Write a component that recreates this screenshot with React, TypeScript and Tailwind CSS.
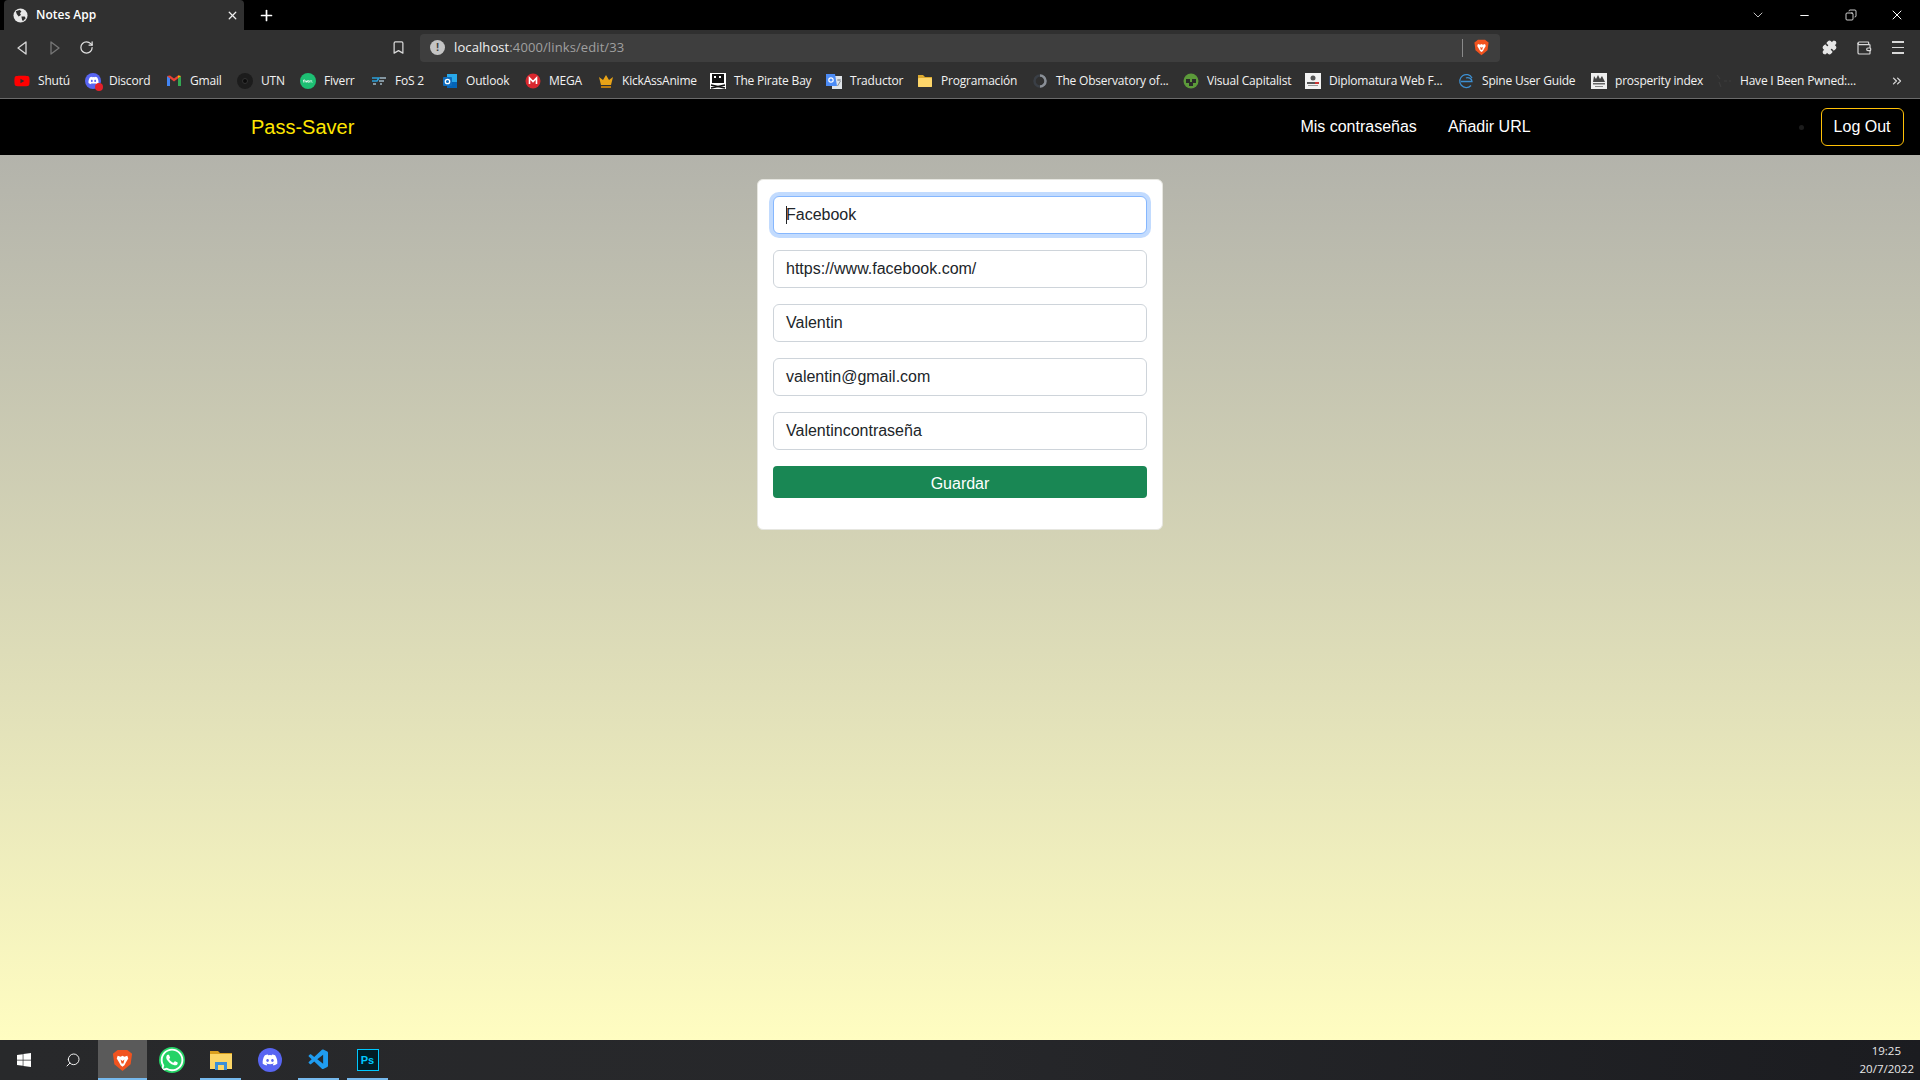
import React from "react";
import { Bookmark, ChevronDown, Minus, Plus, RotateCw, X, Search, Copy, Puzzle, Wallet, ChevronsRight } from "lucide-react";
import { FaWindows, FaWhatsapp, FaDiscord, FaYoutube } from "react-icons/fa";
import { VscVscode } from "react-icons/vsc";
import { SiFiverr } from "react-icons/si";

const ui = "font-['Open_Sans','Noto_Sans',sans-serif]";

function Back() {
  return (
    <svg width="14" height="16" viewBox="0 0 14 16" fill="none" stroke="#d8d8d8" strokeWidth="1.3" strokeLinejoin="round">
      <path d="M11 2 L3 8 L11 14 Z" />
    </svg>
  );
}

function Forward() {
  return (
    <svg width="14" height="16" viewBox="0 0 14 16" fill="none" stroke="#777" strokeWidth="1.3" strokeLinejoin="round">
      <path d="M3 2 L11 8 L3 14 Z" />
    </svg>
  );
}

function GlobeFilled() {
  return (
    <svg width="15" height="15" viewBox="0 0 16 16">
      <circle cx="8" cy="8" r="7.5" fill="#e8e8e8" />
      <path d="M3 3.5 L7 2 L9 3.5 L7.5 5.5 L8.5 7.5 L6 9 L4 6.5 Z" fill="#303030" />
      <path d="M9 9 L12.5 9 L13.5 11 L10.5 14 L9.5 12 Z" fill="#303030" />
    </svg>
  );
}

function BraveIcon({ size = 16 }: { size?: number }) {
  return (
    <svg width={size} height={size} viewBox="0 0 24 24">
      <path d="M12 1 L17 1 L20 3.5 L22 5 L20.5 16 L12 23 L3.5 16 L2 5 L4 3.5 L7 1 Z" fill="#f1531f" />
      <path d="M7 7 L10 8 L12 7 L14 8 L17 7 L18 10 L15.5 14 L14 17 L12 18.5 L10 17 L8.5 14 L6 10 Z" fill="#fff" />
      <path d="M10 11 L12 12.5 L14 11 L13 15 L11 15 Z" fill="#f1531f" />
    </svg>
  );
}

function Gmail() {
  return (
    <svg width="16" height="16" viewBox="0 0 16 16">
      <path d="M1 3 L4 5 V13 H1 Z" fill="#4285f4" />
      <path d="M15 3 L12 5 V13 H15 Z" fill="#34a853" />
      <path d="M1 3 L8 8.5 L15 3 L12 2.5 L8 5.5 L4 2.5 Z" fill="#ea4335" />
      <path d="M12 2.5 L15 3 L12 5 Z" fill="#fbbc04" />
    </svg>
  );
}

function Discordish() {
  return (
    <div className="relative w-4 h-4 rounded-full bg-[#5865f2] flex items-center justify-center">
      <FaDiscord size={11} color="#fff" />
      <div className="absolute right-[-2px] bottom-[-2px] w-2 h-2 rounded-full bg-[#e5202a]" />
    </div>
  );
}

function Utn() {
  return (
    <div className="w-4 h-4 rounded-full bg-[#1c1c1c] flex items-center justify-center">
      <div className="w-[6px] h-[6px] rounded-full bg-[#0c0c0c] border border-[#333]" />
    </div>
  );
}

function Fos() {
  return (
    <svg width="16" height="16" viewBox="0 0 16 16" fill="none" strokeWidth="1.6">
      <path d="M1 5 H8 L6 8 H1" stroke="#2b9fd8" />
      <path d="M9 5 H15 M8 8 H13 M2 11 H5 M9 11 H11" stroke="#9fb7c5" />
    </svg>
  );
}

function Outlook() {
  return (
    <svg width="16" height="16" viewBox="0 0 16 16">
      <rect x="5" y="1" width="10" height="14" fill="#28a8ea" />
      <rect x="5" y="9" width="10" height="6" fill="#0364b8" />
      <rect x="1" y="4" width="9" height="9" rx="1" fill="#0f6cbd" />
      <circle cx="5.5" cy="8.5" r="2.2" fill="none" stroke="#fff" strokeWidth="1.3" />
    </svg>
  );
}

function Mega() {
  return (
    <svg width="16" height="16" viewBox="0 0 16 16">
      <circle cx="8" cy="8" r="7.5" fill="#d9272e" />
      <path d="M4.5 11 V5 L8 8.5 L11.5 5 V11" fill="none" stroke="#fff" strokeWidth="1.6" />
    </svg>
  );
}

function Crown() {
  return (
    <svg width="16" height="16" viewBox="0 0 16 16">
      <path d="M3 12 L1 4 L5 7 L8 2 L11 7 L15 4 L13 12 Z" fill="#e8a317" />
      <rect x="3" y="13" width="10" height="2" fill="#b87a10" />
    </svg>
  );
}

function Pirate() {
  return (
    <svg width="16" height="16" viewBox="0 0 16 16">
      <rect width="16" height="16" fill="#fff" />
      <rect x="2" y="1" width="12" height="9" fill="#111" />
      <rect x="4" y="3" width="2" height="2" fill="#fff" />
      <rect x="9" y="3" width="2" height="2" fill="#fff" />
      <path d="M1 12 L15 15 M15 12 L1 15" stroke="#111" strokeWidth="1.6" />
    </svg>
  );
}

function Translate() {
  return (
    <svg width="16" height="16" viewBox="0 0 16 16">
      <rect x="6" y="3" width="10" height="13" fill="#dfe3e8" />
      <path d="M11 7 H15 M13 6 V8 M11.5 13 L14.5 8" stroke="#8a8f96" strokeWidth="1" />
      <path d="M0 1 H9 L11 13 H0 Z" fill="#4c8bf5" />
      <circle cx="5" cy="7" r="2.2" fill="none" stroke="#fff" strokeWidth="1.2" />
    </svg>
  );
}

function Folder() {
  return (
    <svg width="16" height="16" viewBox="0 0 16 16">
      <path d="M1 2 H6 L8 4 H15 V14 H1 Z" fill="#dba92f" />
      <rect x="1" y="5" width="14" height="9" rx="1" fill="#fdd56a" />
    </svg>
  );
}

function Ring() {
  return (
    <svg width="16" height="16" viewBox="0 0 16 16" fill="none">
      <circle cx="8" cy="8" r="5.5" stroke="#3a3f46" strokeWidth="2.5" />
      <path d="M8 2.5 A5.5 5.5 0 0 1 8 13.5" stroke="#8a8f96" strokeWidth="2.5" />
    </svg>
  );
}

function Creeper() {
  return (
    <svg width="16" height="16" viewBox="0 0 16 16">
      <circle cx="8" cy="8" r="7.5" fill="#5c9a3a" />
      <path d="M3 6 H7 V9 H9 V6 H13 V10 H10 V13 H6 V10 H3 Z" fill="#2a2a2a" />
    </svg>
  );
}

function Diplo() {
  return (
    <svg width="16" height="16" viewBox="0 0 16 16">
      <rect width="16" height="16" fill="#f2f2f2" />
      <circle cx="8" cy="5" r="2.5" fill="#555" />
      <rect x="2" y="9" width="8" height="2" fill="#555" />
      <rect x="10" y="9" width="4" height="2" fill="#c33" />
      <rect x="3" y="12" width="10" height="1" fill="#999" />
    </svg>
  );
}

function Spine() {
  return (
    <svg width="16" height="16" viewBox="0 0 16 16" fill="none" stroke="#3d8fd1" strokeWidth="1.3">
      <path d="M14 5 A6.5 6.5 0 1 0 13 12.5" />
      <path d="M3 8.5 H14 C14 5 10 4 8 5" />
    </svg>
  );
}

function Prosperity() {
  return (
    <svg width="16" height="16" viewBox="0 0 16 16">
      <rect width="16" height="16" fill="#eee" />
      <path d="M2 9 L3 3 L5 6 L7 2 L9 6 L11 3 L14 9 Z" fill="#444" />
      <rect x="2" y="10" width="12" height="1.5" fill="#666" />
      <rect x="4" y="13" width="8" height="1" fill="#888" />
    </svg>
  );
}

function Pwned() {
  return (
    <svg width="16" height="16" viewBox="0 0 16 16" stroke="#3c3c3c" strokeWidth="1.2" fill="none">
      <path d="M1 2 L4 6 M3 9 L5 14 M8 8 H11 M13 8 H15" />
    </svg>
  );
}

const bookmarks: { label: string; icon: React.ReactNode; w: string }[] = [
  { label: "Shutú", icon: <FaYoutube size={16} color="#ff0000" />, w: "w-[71px]" },
  { label: "Discord", icon: <Discordish />, w: "w-[81px]" },
  { label: "Gmail", icon: <Gmail />, w: "w-[71px]" },
  { label: "UTN", icon: <Utn />, w: "w-[63px]" },
  { label: "Fiverr", icon: <div className="w-4 h-4 rounded-full bg-[#1dbf73] flex items-center justify-center"><SiFiverr size={10} color="#fff" /></div>, w: "w-[71px]" },
  { label: "FoS 2", icon: <Fos />, w: "w-[71px]" },
  { label: "Outlook", icon: <Outlook />, w: "w-[83px]" },
  { label: "MEGA", icon: <Mega />, w: "w-[73px]" },
  { label: "KickAssAnime", icon: <Crown />, w: "w-[112px]" },
  { label: "The Pirate Bay", icon: <Pirate />, w: "w-[116px]" },
  { label: "Traductor", icon: <Translate />, w: "w-[91px]" },
  { label: "Programación", icon: <Folder />, w: "w-[115px]" },
  { label: "The Observatory of...", icon: <Ring />, w: "w-[151px]" },
  { label: "Visual Capitalist", icon: <Creeper />, w: "w-[122px]" },
  { label: "Diplomatura Web F...", icon: <Diplo />, w: "w-[153px]" },
  { label: "Spine User Guide", icon: <Spine />, w: "w-[133px]" },
  { label: "prosperity index", icon: <Prosperity />, w: "w-[125px]" },
  { label: "Have I Been Pwned:...", icon: <Pwned />, w: "w-[160px]" },
];

function Field({ value, focused = false }: { value: string; focused?: boolean }) {
  return (
    <div
      className={
        "relative h-[38px] rounded-[6px] border bg-white px-3 flex items-center text-[16px] text-[#212529] " +
        (focused ? "border-[#86b7fe] shadow-[0_0_0_4px_rgba(13,110,253,0.25)]" : "border-[#ced4da]")
      }
    >
      {focused && <div className="absolute left-[12px] top-[9px] w-px h-[18px] bg-[#212529]" />}
      {value}
    </div>
  );
}

function TaskCell({ children, w = "w-[49px]", active = false, line = false }: { children: React.ReactNode; w?: string; active?: boolean; line?: boolean }) {
  return (
    <div className={"relative h-full flex items-center justify-center " + w + (active ? " bg-[#5a5a5a]" : "")}>
      {children}
      {line && <div className={"absolute bottom-0 h-[2px] bg-[#76b9ed] " + (active ? "inset-x-0" : "inset-x-[4px]")} />}
    </div>
  );
}

export default function App() {
  return (
    <div className="w-[1920px] h-[1080px] flex flex-col overflow-hidden font-['Liberation_Sans',Arial,sans-serif]">
      {/* Tab strip */}
      <div className="h-[30px] bg-black flex items-end pl-[4px] shrink-0">
        <div className={"w-[240px] h-[30px] rounded-t-[4px] bg-[#303030] flex items-center pl-[9px] pr-[5px] text-white text-[12px] font-semibold " + ui}>
          <GlobeFilled />
          <span className="ml-[8px] flex-1">Notes App</span>
          <X size={13} color="#eee" strokeWidth={2.4} />
        </div>
        <div className="w-[44px] h-[30px] flex items-center justify-center">
          <Plus size={17} color="#fff" strokeWidth={2.4} />
        </div>
        <div className="flex-1" />
        <div className="h-[30px] flex items-center">
          <div className="w-[46px] flex justify-center"><ChevronDown size={16} strokeWidth={1.3} color="#ddd" /></div>
          <div className="w-[46px] flex justify-center"><Minus size={13} strokeWidth={1.8} color="#fff" /></div>
          <div className="w-[47px] flex justify-center"><Copy size={12} strokeWidth={1.6} color="#fff" className="-scale-x-100" /></div>
          <div className="w-[46px] flex justify-center"><X size={16} strokeWidth={1.5} color="#fff" /></div>
        </div>
      </div>

      {/* Toolbar */}
      <div className="h-[35px] bg-[#303030] flex items-center shrink-0">
        <div className="w-[44px] flex justify-center"><Back /></div>
        <div className="w-[21px] flex justify-center"><Forward /></div>
        <div className="w-[42px] flex justify-center"><RotateCw size={15} color="#e0e0e0" strokeWidth={2} /></div>
        <div className="ml-[283px] w-[16px] flex justify-center"><Bookmark size={15} color="#d8d8d8" strokeWidth={2} /></div>
        <div className="ml-[14px] w-[1080px] h-[28px] rounded-[4px] bg-[#3e3e3e] flex items-center pl-[10px] pr-[10px]">
          <div className="w-[15px] h-[15px] rounded-full bg-[#c4c4c4] flex items-center justify-center">
            <span className="text-[#3e3e3e] text-[11px] font-bold leading-none">!</span>
          </div>
          <div className={"ml-[9px] flex-1 pt-[1px] text-[13px] tracking-[0.1px] " + ui}>
            <span className="text-[#f0f0f0]">localhost</span>
            <span className="text-[#a0a0a0]">:4000/links/edit/33</span>
          </div>
          <div className="w-px h-[18px] bg-[#8a8a8a] mr-[10px]" />
          <BraveIcon size={17} />
        </div>
        <div className="ml-[322px] flex items-center">
          <Puzzle size={15} color="#e6e6e6" fill="#e6e6e6" />
          <div className="ml-[19px]"><Wallet size={16} color="#d8d8d8" strokeWidth={1.8} /></div>
          <div className="ml-[20px] w-[12px] flex flex-col gap-[4px]">
            <div className="h-[1.5px] bg-[#d8d8d8]" />
            <div className="h-[1.5px] bg-[#d8d8d8]" />
            <div className="h-[1.5px] bg-[#d8d8d8]" />
          </div>
        </div>
      </div>

      {/* Bookmarks */}
      <div className={"h-[34px] bg-[#303030] border-b border-[#6a6a6a] flex items-center pl-[14px] pb-[2px] text-[12px] text-[#f2f2f2] shrink-0 relative " + ui}>
        {bookmarks.map((b) => (
          <div key={b.label} className={"flex items-center gap-[8px] shrink-0 whitespace-nowrap tracking-[-0.2px] " + b.w}>
            <div className="w-4 h-4 flex items-center justify-center shrink-0">{b.icon}</div>
            <span>{b.label}</span>
          </div>
        ))}
        <div className="absolute right-[16px] top-[9px]"><ChevronsRight size={14} color="#d8d8d8" strokeWidth={2.2} /></div>
      </div>

      {/* Navbar */}
      <div className="h-[56px] bg-black flex items-center pl-[251px] pr-[16px] shrink-0">
        <span className="text-[20px] text-[#ffe600]">Pass-Saver</span>
        <div className="ml-[946px] text-[16px] text-white">Mis contraseñas</div>
        <div className="ml-[31px] text-[16px] text-white">Añadir URL</div>
        <div className="ml-[268px] w-[5px] h-[5px] rounded-full bg-[#1c1c1c]" />
        <div className="ml-[17px] w-[83px] h-[38px] rounded-[6px] border border-[#ffc107] flex items-center justify-center text-[16px] text-white">Log Out</div>
      </div>

      {/* Main */}
      <div className="flex-1 bg-gradient-to-b from-[#b3b3ab] to-[#fffdc1] flex justify-center pt-[24px]">
        <div className="w-[406px] h-[351px] rounded-[6px] bg-white border border-[#e6e6e0] pt-[16px] px-[15px] flex flex-col gap-[16px]">
          <Field value="Facebook" focused />
          <Field value="https://www.facebook.com/" />
          <Field value="Valentin" />
          <Field value="valentin@gmail.com" />
          <Field value="Valentincontraseña" />
          <div className="h-[32px] rounded-[4px] bg-[#198754] flex items-center justify-center pt-[4px] text-[16px] text-white">Guardar</div>
        </div>
      </div>

      {/* Taskbar */}
      <div className="h-[40px] bg-gradient-to-r from-[#28292b] via-[#26272a] to-[#1b1c20] flex items-center shrink-0">
        <TaskCell w="w-[48px]"><FaWindows size={16} color="#fff" /></TaskCell>
        <TaskCell w="w-[50px]"><Search size={16} color="#fff" strokeWidth={1.4} className="-scale-x-100" /></TaskCell>
        <TaskCell w="w-[49px]" active line><BraveIcon size={23} /></TaskCell>
        <TaskCell w="w-[49px]"><FaWhatsapp size={26} color="#fff" className="rounded-full bg-[#25d366]" /></TaskCell>
        <TaskCell w="w-[49px]" line>
          <svg width="22" height="20" viewBox="0 0 22 20">
            <path d="M0 1 H8 L10 3 H22 V19 H0 Z" fill="#d99f1e" />
            <rect x="0" y="4" width="22" height="15" fill="#fbd667" />
            <rect x="5" y="12" width="12" height="8" fill="#3a8fd8" />
            <rect x="8" y="15" width="6" height="5" fill="#fbd667" />
          </svg>
        </TaskCell>
        <TaskCell w="w-[49px]">
          <div className="w-6 h-6 rounded-full bg-[#5865f2] flex items-center justify-center"><FaDiscord size={16} color="#fff" /></div>
        </TaskCell>
        <TaskCell w="w-[49px]" line><VscVscode size={24} color="#1f9cf0" /></TaskCell>
        <TaskCell w="w-[49px]" line>
          <div className="w-[22px] h-[22px] bg-[#001d26] border border-[#00c8ff] flex items-center justify-center text-[11px] font-bold text-[#00c8ff]">Ps</div>
        </TaskCell>
        <div className="flex-1" />
        <div className={"pr-[6px] flex flex-col items-end text-[11.5px] leading-[18px] text-[#e8e8e8] " + ui}>
          <span className="pr-[13px]">19:25</span>
          <span>20/7/2022</span>
        </div>
      </div>
    </div>
  );
}
